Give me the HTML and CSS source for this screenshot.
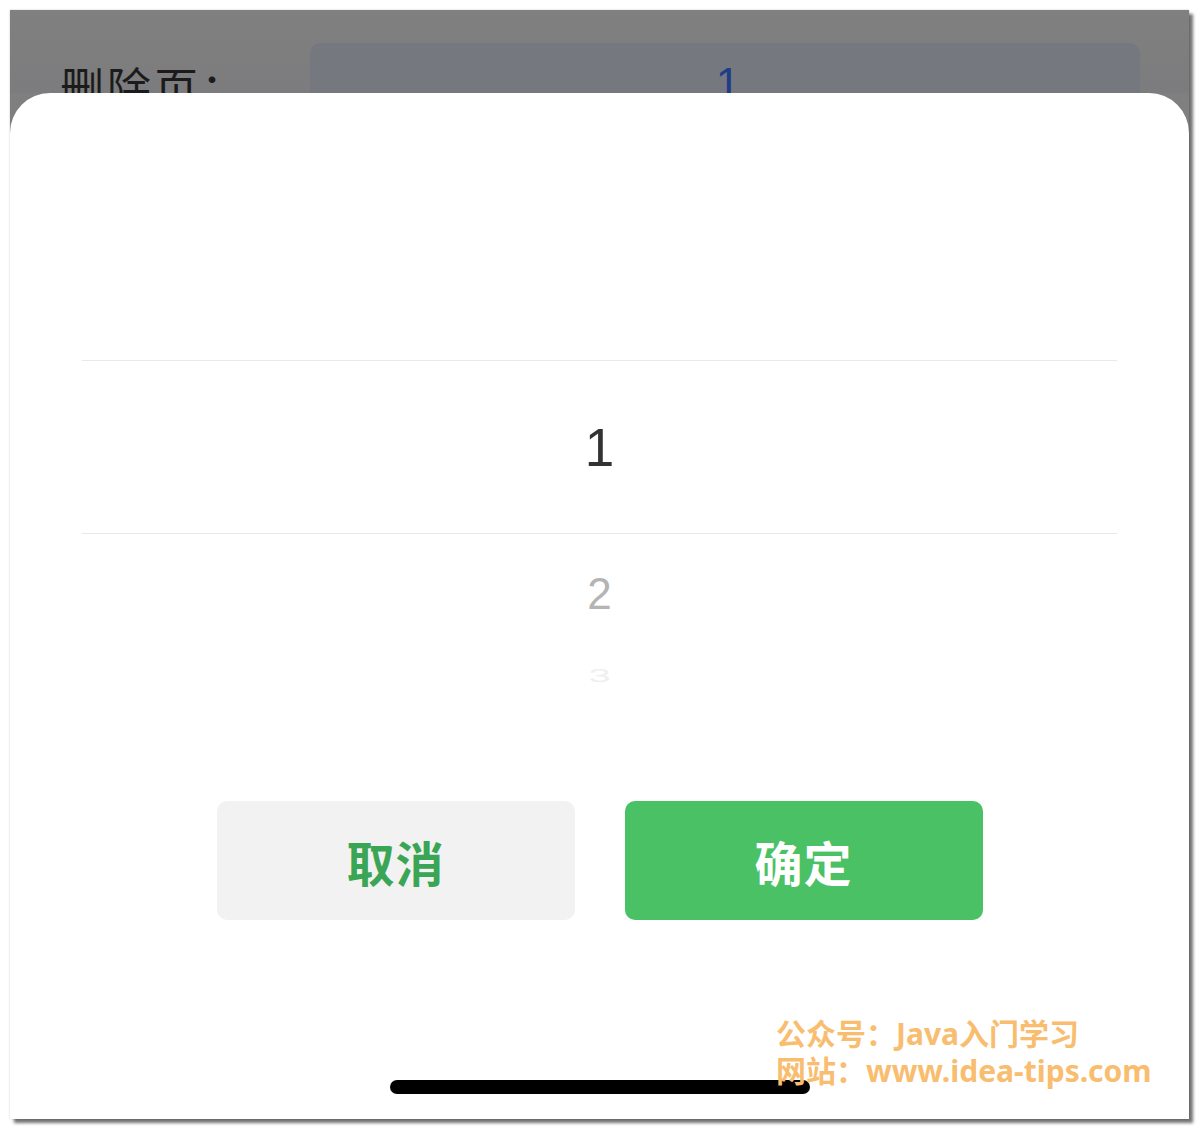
FILE: index.html
```html
<!DOCTYPE html>
<html lang="zh-CN">
<head>
<meta charset="utf-8">
<title>删除页</title>
<link rel="stylesheet" href="styles.css">
</head>
<body>
<div class="shot">
  <div class="backdrop">
    <div class="form-row">
      <span class="label">删除页：</span>
      <div class="input"><span class="input-val">1</span></div>
    </div>
  </div>
  <div class="sheet">
    <div class="picker">
      <div class="row sel">1</div>
      <div class="row next">2</div>
      <div class="row far"><span>3</span></div>
    </div>
    <div class="actions">
      <button class="btn cancel">取消</button>
      <button class="btn ok">确定</button>
    </div>
    <div class="home"></div>
  </div>
  <div class="watermark">
    <div>公众号：Java入门学习</div>
    <div>网站：www.idea-tips.com</div>
  </div>
</div>
</body>
</html>
```
FILE: styles.css
```css
* { box-sizing: border-box; }
html, body { margin: 0; padding: 0; background: #fff; }
body { width: 1200px; height: 1130px; padding: 10px 0 0 10px; font-family: "Liberation Sans", "Noto Sans CJK SC", sans-serif; }

.shot {
  position: relative;
  width: 1179px;
  height: 1109px;
  background: #7f7f7f;
  display: flex;
  flex-direction: column;
  box-shadow: 4px 4px 3px rgba(0,0,0,0.55), 0 0 2px rgba(0,0,0,0.2);
}

.backdrop {
  height: 83px;
  overflow: hidden;
  background: linear-gradient(#808080, #7c7c7e);
}
.form-row {
  display: flex;
  align-items: flex-start;
  padding: 33px 0 0 50px;
}
.label {
  margin-top: 21px;
  font-family: "Noto Sans CJK SC", sans-serif;
  font-size: 44px;
  line-height: 44px;
  letter-spacing: 3px;
  color: #1b1b1b;
  width: 250px;
  white-space: nowrap;
}
.input {
  width: 830px;
  height: 90px;
  border-radius: 10px;
  background: #75787f;
  display: flex;
  justify-content: center;
}
.input-val {
  margin-top: 19px;
  margin-left: 6px;
  font-family: "Liberation Sans", sans-serif;
  font-size: 44px;
  line-height: 44px;
  color: #1d3e86;
}

.sheet {
  flex: 1;
  background: #fff;
  border-radius: 40px 40px 0 0;
  display: flex;
  flex-direction: column;
  align-items: center;
}

.picker {
  margin-top: 267px;
  width: 1035px;
  display: flex;
  flex-direction: column;
  align-items: stretch;
  font-family: "Liberation Sans", sans-serif;
}
.row {
  display: flex;
  align-items: center;
  justify-content: center;
}
.sel {
  height: 174px;
  border-top: 1px solid #e8e8e8;
  border-bottom: 1px solid #e8e8e8;
  font-size: 53px;
  color: #333;
}
.next {
  height: 120px;
  font-size: 44px;
  color: #b4b4b4;
}
.far {
  height: 42px;
  font-size: 40px;
  color: #efefef;
}
.far span { display: inline-block; transform: scaleY(0.45); }

.actions {
  margin-top: 105px;
  display: flex;
  gap: 50px;
}
.btn {
  width: 358px;
  height: 119px;
  border: none;
  border-radius: 10px;
  font-family: "Noto Sans CJK SC", sans-serif;
  font-weight: 700;
  font-size: 48px;
  letter-spacing: 1px;
  padding: 0;
}
.cancel { background: #f2f2f2; color: #3aa655; }
.ok { background: #4ac164; color: #fff; }

.home {
  margin-top: 160px;
  width: 420px;
  height: 14px;
  border-radius: 7px;
  background: #000;
}

.watermark {
  position: absolute;
  left: 766px;
  top: 1005px;
  font-family: "Noto Sans", "Noto Sans CJK SC", sans-serif;
  font-weight: 700;
  font-size: 30px;
  line-height: 37px;
  color: #f8bd6f;
}
```
